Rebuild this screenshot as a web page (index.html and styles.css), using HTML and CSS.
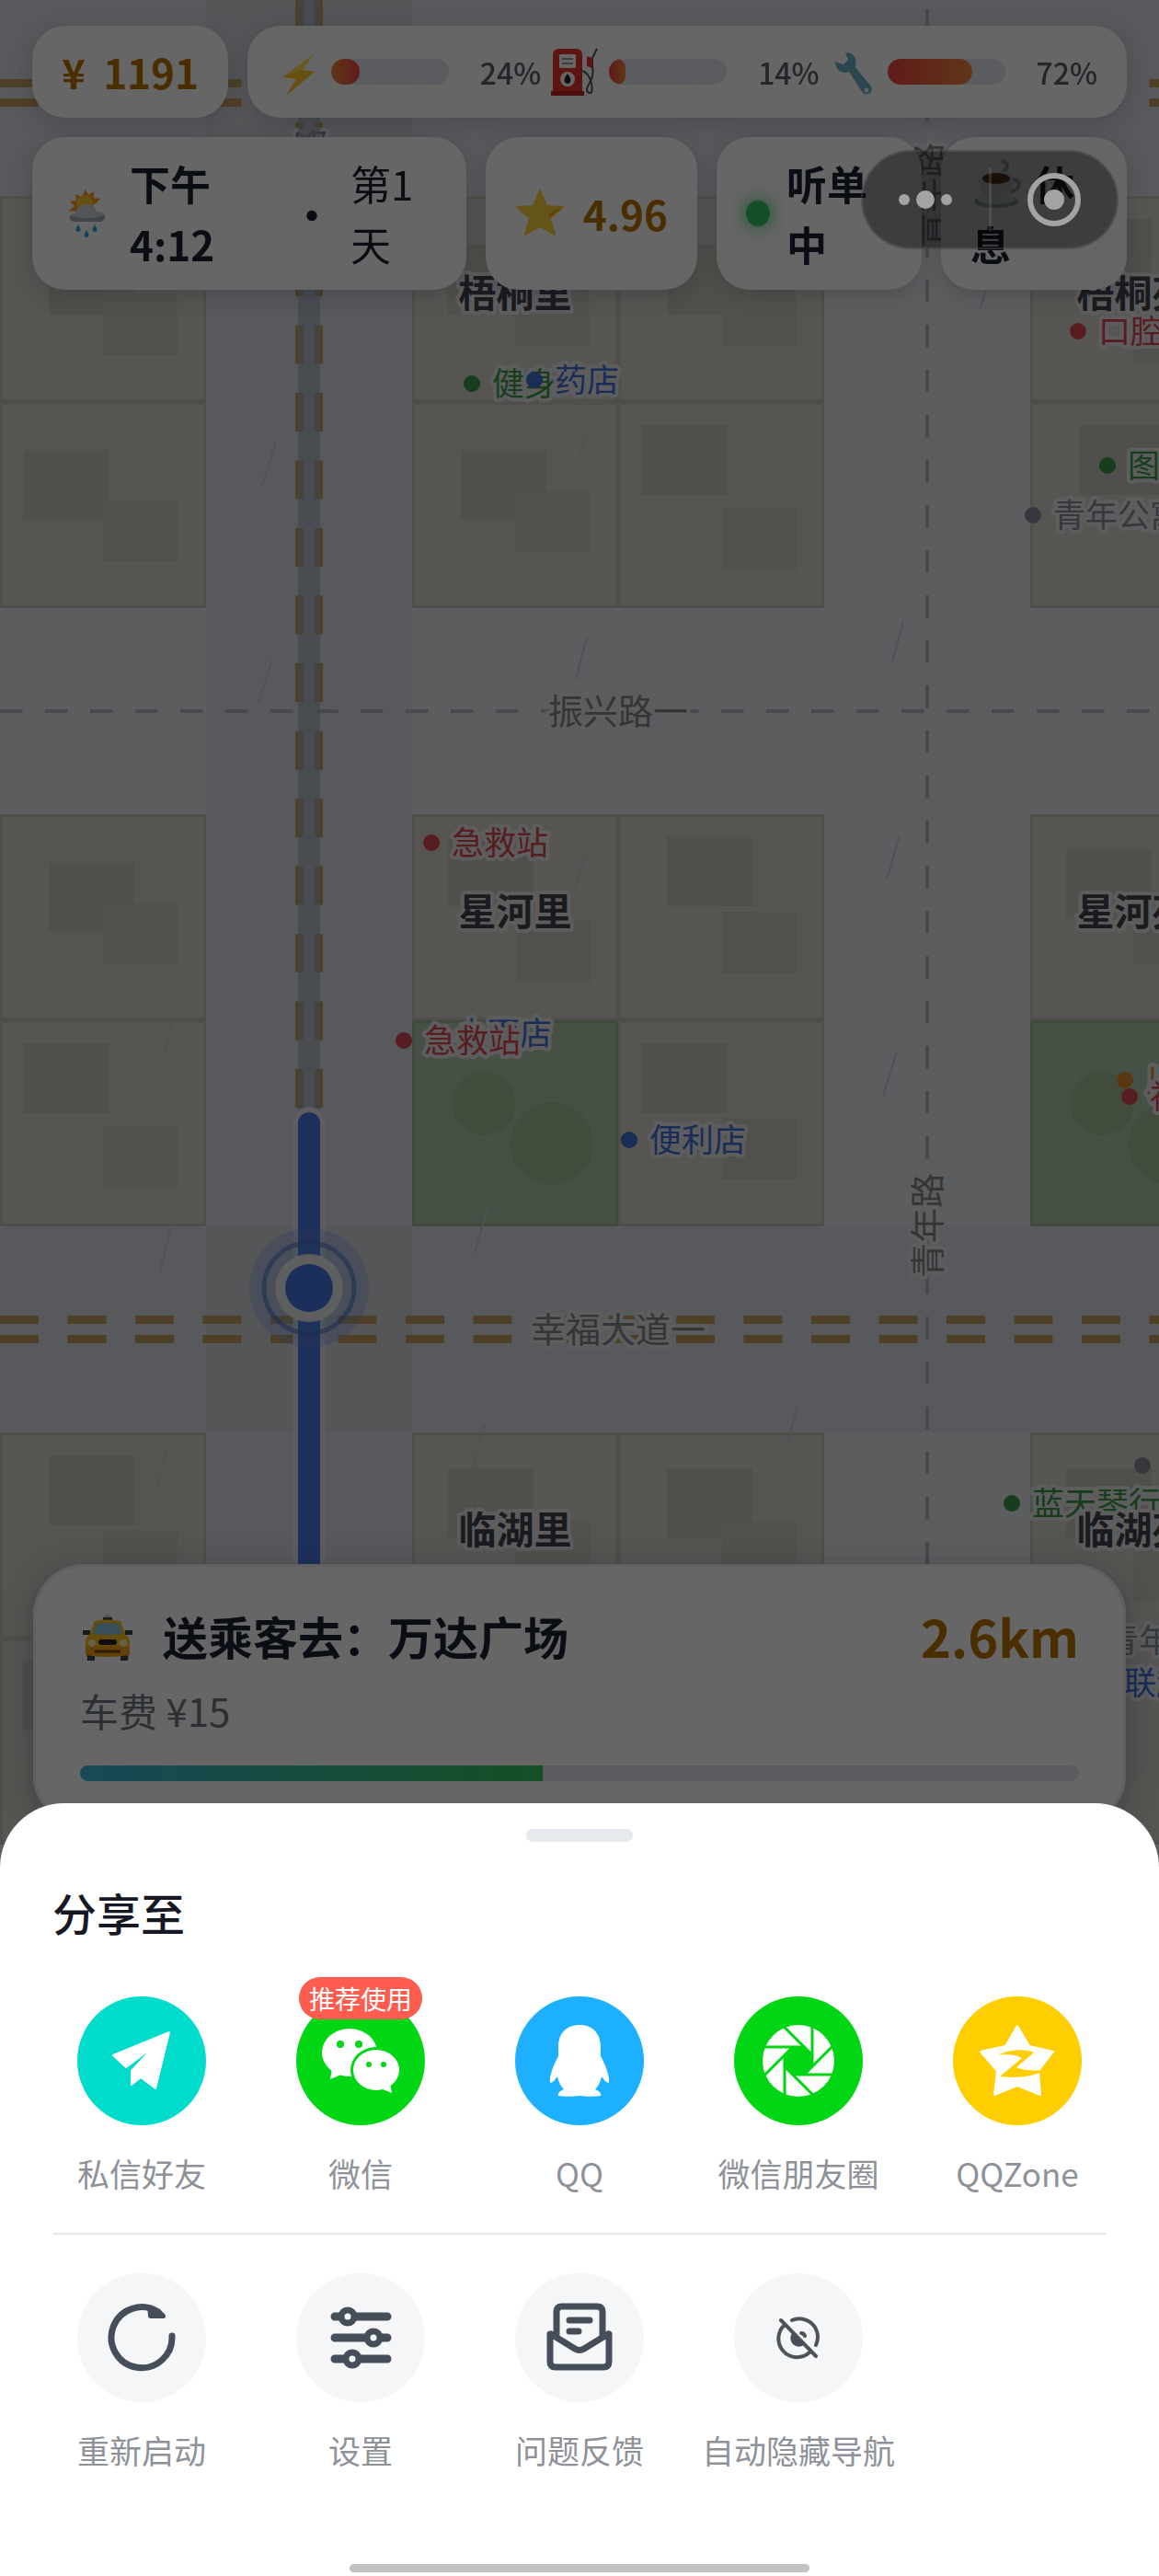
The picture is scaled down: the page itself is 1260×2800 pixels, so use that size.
FILE: index.html
```html
<!DOCTYPE html>
<html lang="zh-CN">
<head>
  <meta charset="UTF-8" />
  <meta name="viewport" content="width=device-width, initial-scale=1.0"/>
  <title>分享至</title>

  <link rel="stylesheet" href="styles.css">
</head>

<body>
  <div class="screen">
    <!-- city map -->
    <svg class="map" viewBox="0 0 1260 2800" preserveAspectRatio="xMidYMin slice" aria-hidden="true">
      <defs>
        <g id="block">
          <rect width="224" height="224" fill="#c6c4bb"/>
          <rect x="3" y="3" width="218" height="218" fill="#d6d4cd"/>
        </g>
        <g id="park">
          <rect width="224" height="224" fill="#a2b798"/>
          <rect x="3" y="3" width="218" height="218" fill="#b2c9ab"/>
          <circle cx="78" cy="90" r="35" fill="#a6bf9a"/>
          <circle cx="152" cy="134" r="45" fill="#a6bf9a"/>
        </g>
        <rect id="b1" width="93" height="76" fill="#c9c5bc"/>
        <rect id="b2" width="81" height="67" fill="#cdc9c0"/>
      </defs>

      <rect width="1260" height="2800" fill="#e6e8ec"/>
      <!-- main roads -->
      <rect x="224" width="224" height="2800" fill="#dcdee5"/>
      <rect y="0" width="1260" height="213" fill="#dcdee5"/>
      <rect y="1333" width="1260" height="224" fill="#dcdee5"/>
      <rect x="224" y="0" width="224" height="213" fill="#d4d6dc"/>
      <rect x="224" y="1333" width="224" height="224" fill="#d4d6dc"/>

      <use href="#block" x="0" y="213"/><use href="#block" x="448" y="213"/><use href="#block" x="672" y="213"/><use href="#block" x="1120" y="213"/>
      <use href="#block" x="0" y="437"/><use href="#block" x="448" y="437"/><use href="#block" x="672" y="437"/><use href="#block" x="1120" y="437"/>
      <use href="#block" x="0" y="885"/><use href="#block" x="448" y="885"/><use href="#block" x="672" y="885"/><use href="#block" x="1120" y="885"/>
      <use href="#block" x="0" y="1109"/><use href="#park" x="448" y="1109"/><use href="#block" x="672" y="1109"/><use href="#park" x="1120" y="1109"/>
      <use href="#block" x="0" y="1557"/><use href="#block" x="448" y="1557"/><use href="#block" x="672" y="1557"/><use href="#block" x="1120" y="1557"/>
      <use href="#block" x="0" y="1781"/><use href="#block" x="448" y="1781"/><use href="#block" x="672" y="1781"/><use href="#block" x="1120" y="1781"/>

      <!-- buildings -->
      <use href="#b1" x="53" y="266"/><use href="#b2" x="112" y="319"/>
      <use href="#b1" x="487" y="266"/><use href="#b2" x="560" y="308"/>
      <use href="#b1" x="725" y="266"/><use href="#b2" x="785" y="308"/>
      <use href="#b1" x="1159" y="238"/><use href="#b2" x="1232" y="329"/>
      <use href="#b1" x="25" y="489"/><use href="#b2" x="112" y="543"/>
      <use href="#b1" x="501" y="489"/><use href="#b2" x="560" y="533"/>
      <use href="#b1" x="697" y="462"/><use href="#b2" x="785" y="553"/>
      <use href="#b1" x="1173" y="462"/>
      <use href="#b1" x="53" y="937"/><use href="#b2" x="112" y="981"/>
      <use href="#b1" x="487" y="909"/><use href="#b2" x="561" y="1001"/>
      <use href="#b1" x="725" y="909"/><use href="#b2" x="785" y="991"/>
      <use href="#b1" x="1159" y="923"/><use href="#b2" x="1232" y="980"/>
      <use href="#b1" x="25" y="1134"/><use href="#b2" x="112" y="1225"/>
      <use href="#b1" x="697" y="1134"/><use href="#b2" x="785" y="1215"/>
      <use href="#b1" x="53" y="1582"/><use href="#b2" x="112" y="1663"/>
      <use href="#b1" x="487" y="1596"/><use href="#b2" x="561" y="1653"/>
      <use href="#b1" x="725" y="1596"/><use href="#b2" x="785" y="1653"/>
      <use href="#b1" x="1159" y="1596"/><use href="#b2" x="1232" y="1673"/>
      <use href="#b1" x="25" y="1805"/>

      <!-- lane marks -->
      <g stroke="#b4b6be" stroke-width="4" stroke-dasharray="24.5 24.5">
        <path d="M0 773H1260"/>
        <path d="M1008 10V2000"/>
      </g>
      <g stroke="#c4a062" stroke-width="9" stroke-dasharray="42 31.5">
        <path d="M0 90.500H1260M0 111.500H1260M0 1434.500H1260M0 1455.500H1260"/>
        <path d="M325.500 -14V1205M346.500 -14V1205"/>
      </g>

      <!-- rain -->
      <path d="M300 481l-15 47M296 717l-15 47M191 1100l-14 48M636 929l-15 46M978 908l-14 48M975 1143l-15 48M530 1314l-14 48M527 1548l-14 47M867 1528l-12 47M183 1570l-13 47M1079 290l-14 47M642 462l-14 40M638 693l-12 45M982 675l-12 45M186 1334l-12 48" stroke="#c4cedd" stroke-width="2" fill="none"/>

      <g class="road-name">
        <text x="672" y="787">振兴路一</text>
        <text x="672" y="1459">幸福大道一</text>
        <text transform="translate(1022 212) rotate(-90)">青年路</text>
        <text transform="translate(1022 1332) rotate(-90)">青年路</text>
        <text transform="translate(350 196) rotate(-90)">青年路</text>
      </g>

      <!-- route -->
      <path d="M336 0V1209" stroke="#a2abba" stroke-opacity=".65" stroke-width="24"/>
      <path d="M336 1221V2800" stroke="#e8e9ea" stroke-width="35" stroke-linecap="round"/>
      <path d="M336 1221V2800" stroke="#4a78e4" stroke-width="24" stroke-linecap="round"/>

      <!-- shops -->
      <g class="poi green">
        <circle cx="513" cy="417" r="9"/><text x="535" y="430">健身</text>
        <circle cx="1204" cy="506" r="9"/><text x="1226" y="519">图书馆</text>
        <circle cx="1100" cy="1634" r="9"/><text x="1122" y="1647">蓝天琴行</text>
      </g>
      <g class="poi blue">
        <text x="495" y="1136">小面店</text>
        <circle cx="581" cy="413" r="9"/><text x="603" y="426">药店</text>
        <circle cx="684" cy="1239" r="9"/><text x="706" y="1252">便利店</text>
        <circle cx="1165" cy="1829" r="9"/><text x="1187" y="1842">华联超市</text>
      </g>
      <g class="poi orange">
        <text x="1246" y="1187">川菜馆</text>
        <circle cx="1223" cy="1174" r="9"/>
      </g>
      <g class="poi gray">
        <circle cx="1123" cy="560" r="9"/><text x="1145" y="573">青年公寓</text>
        <circle cx="1242" cy="1593" r="9"/>
        <circle cx="1181" cy="1783" r="9"/><text x="1203" y="1796">青年公寓</text>
        <circle cx="560" cy="1877" r="9"/><text x="582" y="1890">青年公寓</text>
      </g>
      <g class="poi red">
        <circle cx="1172" cy="360" r="9"/><text x="1194" y="373">口腔诊所</text>
        <circle cx="469" cy="916" r="9"/><text x="491" y="929">急救站</text>
        <circle cx="439" cy="1131" r="9"/><text x="461" y="1144">急救站</text>
        <circle cx="1228" cy="1192" r="9"/><text x="1250" y="1205">社区医院</text>
        <circle cx="646" cy="1735" r="9"/><text x="668" y="1748">同仁药店</text>
      </g>
      <g class="area-name">
        <text x="560" y="334">梧桐里</text>
        <text x="1232" y="334">梧桐苑</text>
        <text x="560" y="1006">星河里</text>
        <text x="1232" y="1006">星河苑</text>
        <text x="560" y="1678">临湖里</text>
        <text x="1232" y="1678">临湖苑</text>
      </g>

      <!-- driver -->
      <circle cx="336" cy="1400" r="65" fill="#5b8def" fill-opacity=".25"/>
      <circle cx="336" cy="1400" r="49" fill="none" stroke="#4a78c4" stroke-opacity=".6" stroke-width="5"/>
      <circle cx="336" cy="1400" r="37" fill="#e9eaea"/>
      <circle cx="336" cy="1400" r="26" fill="#4378e0"/>
    </svg>

    <header class="hud">
      <div class="hudRow">
        <div class="card money"><span>¥</span><span>1191</span></div>
        <div class="card stats">
          <div class="stat">
            <svg class="emoji" viewBox="0 0 44 54" aria-hidden="true"><path d="M40 8L6 33 21 35 10 53 41 27 28 25Z" fill="#ffc928"/><path d="M40 8L8 32 28 25z" fill="#ffe052"/></svg>
            <div class="bar"><div class="barFill low" style="width: 24%"></div></div>
            <span class="percent">24%</span>
          </div>
          <div class="stat">
            <svg class="emoji" viewBox="0 0 44 54" aria-hidden="true">
              <path d="M-2 50V9q0-7 7-7h18q7 0 7 7v41z" fill="#e8352e"/><path d="M-4 48h36v5H-4z" fill="#b8251f"/>
              <path d="M5 9q0-1 1-1h16q1 0 1 1v13q0 1-1 1H6q-1 0-1-1z" fill="#fff"/><path d="M8 13h12M8 18h12" stroke="#9aa0a6" stroke-width="2"/>
              <circle cx="14" cy="35" r="8" fill="#fff"/><path d="M14 29q7 9 0 11-7-2 0-11z" fill="#222"/>
              <path d="M30 26q8 3 10 14t-2 10q-6-1 0-11 5-8 3-18V12l5-10" fill="none" stroke="#555" stroke-width="2"/><path d="M35 10l6 2v11l-6-2z" fill="#e8352e"/>
            </svg>
            <div class="bar"><div class="barFill fuel" style="width: 14%"></div></div>
            <span class="percent">14%</span>
          </div>
          <div class="stat">
            <svg class="emoji" viewBox="0 0 44 54" aria-hidden="true"><path d="M13 6l3 8-5 5-9-3c0 10 9 14 15 11l15 23c5 4 12-1 9-7L24 22C26 12 22 6 13 6z" fill="#6fb0c8"/><circle cx="36" cy="47" r="2.500" fill="#e8f2f5"/></svg>
            <div class="bar"><div class="barFill fuel" style="width: 72%"></div></div>
            <span class="percent">72%</span>
          </div>
        </div>
      </div>

      <div class="hudRow info">
        <div class="card clock">
          <svg class="emoji" viewBox="0 0 44 54" aria-hidden="true">
            <path d="M20 1l3 6 6-4v7l7 1-5 5-23 16 2-7-8-1 6-5-5-5 7-1-1-7 7 3z" fill="#f79a1f"/><circle cx="19" cy="16" r="9" fill="#ffc62e"/>
            <path d="M9 36c-9 0-8-9 0-9 2-12 20-14 23-2 12 0 12 11 3 11z" fill="#cfd8dc"/><path d="M9 36c-6 0-7-5-5-7 10 5 28 4 37-1 0 5-2 8-6 8z" fill="#9fb0b8"/>
            <path d="M12 39q5 8 0 8t0-8zM30 39q5 8 0 8t0-8zM21 45q5 8 0 8t0-8z" fill="#29a8e0"/>
          </svg>
          <strong class="time">下午<br>4:12</strong>
          <strong>·</strong>
          <span class="day">第1<br>天</span>
        </div>
        <div class="card rating">
          <svg class="emoji" viewBox="0 0 54 54" aria-hidden="true"><path d="M27 2l7 17 18 1-14 12 5 18-16-9-16 9 5-18L2 20l18-1z" fill="#fdd33c" stroke="#fdd33c" stroke-width="2" stroke-linejoin="round"/><path d="M38 32l13-12-15 8z" fill="#f0a81c"/></svg>
          <strong>4.96</strong>
        </div>
        <div class="card status"><span class="statusDot"></span><strong>听单<br>中</strong></div>
        <button type="button" class="card rest">
          <svg class="emoji" viewBox="0 0 54 54" aria-hidden="true">
            <path d="M32 1c8 2 8 8 1 12" fill="none" stroke="#b9bec4" stroke-width="4"/>
            <ellipse cx="26" cy="45" rx="24" ry="7" fill="#a9bfc0"/><ellipse cx="26" cy="43" rx="20" ry="5" fill="#e8eeee"/>
            <path d="M42 22c12-4 12 13-3 13" fill="none" stroke="#a9bfc0" stroke-width="4"/>
            <path d="M8 19h36c1 14-5 26-18 26S7 33 8 19z" fill="#dfe5e6"/><ellipse cx="26" cy="19" rx="18" ry="7" fill="#f5f5f5"/><ellipse cx="26" cy="20" rx="15" ry="6" fill="#6b3a22"/>
          </svg>
          休<br>息
        </button>
      </div>
    </header>

    <article class="card order">
      <div class="orderHead">
        <svg class="taxi" viewBox="0 0 56 56" aria-hidden="true">
          <path d="M23 9q5-10 10 0v4H23z" fill="#d5d8da"/><path d="M23 8h10v4H23z" fill="#444"/>
          <path d="M5 43h9v12H6zM42 43h9l-1 12h-8z" fill="#3a4448"/>
          <path d="M14 12q14-3 28 0l6 15q5 4 4 12v8H4v-8q-1-8 4-12z" fill="#f9c21b"/><path d="M4 39h48v10q-24 4-48 0z" fill="#f3a01b"/>
          <path d="M16 15q12-2 24 0l4 11q-16 2-32 0z" fill="#8cc4dc"/><path d="M1 22h8v5H1zM47 22h8v5h-8z" fill="#3a4448"/>
          <circle cx="11" cy="36" r="4" fill="#fff1b0"/><circle cx="45" cy="36" r="4" fill="#fff1b0"/><rect x="18" y="32" width="20" height="6" rx="3" fill="#222"/><path d="M14 45h28" stroke="#6b4a12" stroke-width="3"/>
        </svg>
        <h2>送乘客去：万达广场</h2>
        <strong class="distance">2.6km</strong>
      </div>
      <p class="fare">车费 ¥15</p>
      <div class="trip"><div class="tripFill" style="width: 46.3%"></div></div>
    </article>

    <div class="mask"></div>

    <div class="capsule">
      <button type="button" aria-label="更多">
        <svg width="60" height="60" viewBox="0 0 60 60"><circle cx="7" cy="30" r="6"/><circle cx="30" cy="30" r="10"/><circle cx="53" cy="30" r="6"/></svg>
      </button>
      <button type="button" aria-label="关闭">
        <svg width="60" height="60" viewBox="0 0 60 60"><circle cx="30" cy="30" r="26" fill="none" stroke="#a3a3a3" stroke-width="6"/><circle cx="30" cy="30" r="11"/></svg>
      </button>
    </div>

    <section class="sheet">
      <div class="handle"></div>
      <h1>分享至</h1>

      <div class="actions">
        <button type="button" class="action">
          <svg class="icon teal" viewBox="0 0 140 140"><path d="M100 39L39 64 53 77 84 54 59 81V96L69 88 85 100Z" stroke="#fff" stroke-width="2" stroke-linejoin="round"/></svg>
          <span>私信好友</span>
        </button>
        <button type="button" class="action">
          <span class="badge">推荐使用</span>
          <svg class="icon wechat" viewBox="0 0 140 140">
            <ellipse cx="58" cy="61" rx="30" ry="26"/><path d="M39 78l-2 12 12-5z"/>
            <circle class="hole" cx="48" cy="52" r="4"/><circle class="hole" cx="68" cy="52" r="4"/>
            <ellipse class="hole" cx="87" cy="80" rx="28" ry="25"/>
            <ellipse cx="87" cy="80" rx="25" ry="22"/><path d="M94 101l10 4-2-11z"/>
            <circle class="hole" cx="79" cy="74" r="3"/><circle class="hole" cx="95" cy="74" r="3"/>
          </svg>
          <span>微信</span>
        </button>
        <button type="button" class="action">
          <svg class="icon qq" viewBox="0 0 140 140"><path d="M70 31C55 31 47 41 47 55V65C42 74 37 86 38 94 41 94 44 90 46 87 47 93 50 98 53 101 48 103 46 106 47 108 52 109 64 109 70 108 76 109 88 109 93 108 94 106 92 103 87 101 90 98 93 93 94 87 96 90 99 94 102 94 103 86 98 74 93 65V55C93 41 85 31 70 31Z"/></svg>
          <span>QQ</span>
        </button>
        <button type="button" class="action">
          <svg class="icon wechat" viewBox="0 0 140 140">
            <defs><path id="blade" d="M85 76V26"/></defs>
            <circle cx="70" cy="70" r="39"/>
            <path class="hole" d="M64 55h12l9 9v12l-9 9H64l-9-9V64z"/>
            <g stroke="#00d614" stroke-width="3">
              <use href="#blade"/><use href="#blade" transform="rotate(45 70 70)"/><use href="#blade" transform="rotate(90 70 70)"/><use href="#blade" transform="rotate(135 70 70)"/>
              <use href="#blade" transform="rotate(180 70 70)"/><use href="#blade" transform="rotate(225 70 70)"/><use href="#blade" transform="rotate(270 70 70)"/><use href="#blade" transform="rotate(315 70 70)"/>
            </g>
          </svg>
          <span>微信朋友圈</span>
        </button>
        <button type="button" class="action">
          <svg class="icon qzone" viewBox="0 0 140 140">
            <path d="M70 32L83 54 109 60 93 81 95 107 70 97 45 107 48 81 30 60 57 54Z" stroke="#fff" stroke-width="2" stroke-linejoin="round"/>
            <path class="hole" d="M49 64C58 58 78 56 88 61L69 77C77 81 90 81 99 80 88 88 66 89 51 87L75 67C68 63 57 62 49 64Z"/>
          </svg>
          <span>QQZone</span>
        </button>
      </div>

      <hr>

      <div class="actions">
        <button type="button" class="action">
          <svg class="icon tool" viewBox="0 0 140 140"><path d="M103 68A33 33 0 1 1 88 42" fill="none"/><path class="solid" d="M76 36Q88 37 95 44q3 5-2 5H80q-3 0-3-3z"/></svg>
          <span>重新启动</span>
        </button>
        <button type="button" class="action">
          <svg class="icon tool" viewBox="0 0 140 140">
            <path d="M42 47H99M42 70H99M42 93H99" stroke-width="9"/>
            <g fill="#f4f6f8"><circle cx="56" cy="47" r="7"/><circle cx="84" cy="70" r="7"/><circle cx="61" cy="93" r="7"/></g>
          </svg>
          <span>设置</span>
        </button>
        <button type="button" class="action">
          <svg class="icon tool" viewBox="0 0 140 140"><path d="M45 68V42q0-6 6-6h38q6 0 6 6V68M39 66L65 82q5 3 10 0L101 66M38 66V96q0 6 6 6H96q6 0 6-6V66M59 51H81M59 63H69" fill="none"/></svg>
          <span>问题反馈</span>
        </button>
        <button type="button" class="action">
          <svg class="icon tool nav" viewBox="0 0 140 140"><path d="M63 51A20 20 0 0 1 89 78M82 86A20 20 0 0 1 55 56M51 51L89 90M73 65q3 0 4 3" fill="none"/><path class="solid" d="M64 64L77 77A8 8 0 1 1 64 64z"/></svg>
          <span>自动隐藏导航</span>
        </button>
      </div>

      <div class="homeBar"></div>
    </section>
  </div>
</body>
</html>
```
FILE: styles.css
```css
* {
  box-sizing: border-box;
  margin: 0;
  padding: 0;
}

body {
  font-family: "Noto Sans CJK SC", "Noto Sans", sans-serif;
  color: #161823;
  background: #5c5d60;
}

button {
  font: inherit;
  color: inherit;
  background: none;
  border: none;
  cursor: pointer;
}

.screen {
  position: relative;
  min-height: 100vh;
  display: flex;
  flex-direction: column;
  overflow: hidden;
}

/* map */
.map {
  position: absolute;
  top: 0;
  left: 0;
  width: 100%;
  height: 100%;
}

.map text {
  paint-order: stroke;
  stroke: #e8e9ec;
  stroke-width: 8px;
  stroke-linejoin: round;
}

.road-name text {
  font-size: 38px;
  fill: #84868c;
  text-anchor: middle;
}

.area-name text {
  font-size: 41px;
  font-weight: bold;
  fill: #3f444e;
  text-anchor: middle;
}

.poi text {
  font-size: 35px;
}

.red { fill: #d94a50; }
.green { fill: #3a9a48; }
.blue { fill: #3f70d8; }
.orange { fill: #e08a2c; }
.gray { fill: #8a8d98; }

/* hud */
.hud {
  position: relative;
  padding: 28px 35px;
  display: flex;
  flex-direction: column;
  gap: 21px;
}

.hudRow {
  display: flex;
  gap: 21px;
}

.info {
  display: grid;
  grid-template-columns: 472fr 230fr 223fr 202fr;
}

.card {
  background: rgba(255, 255, 255, 0.97);
  border-radius: 36px;
  box-shadow: 0 6px 24px rgba(30, 41, 59, 0.2);
}

.hud .card {
  padding: 17px 32px;
  display: flex;
  align-items: center;
  font-size: 44px;
  line-height: 66px;
  color: #1c2232;
  white-space: nowrap;
  backdrop-filter: blur(12px);
}

.hud .money {
  justify-content: space-between;
  flex: 0 0 213px;
  font-weight: bold;
  color: #b87400;
}

.hud .stats {
  flex: 1;
  gap: 15px;
}

.stat {
  flex: 1;
  display: flex;
  align-items: center;
  gap: 15px;
}

.emoji {
  flex: none;
  height: 54px;
  overflow: visible;
}

.bar {
  flex: 0 0 128px;
  height: 28px;
  border-radius: 14px;
  background: #e2e5ee;
  overflow: hidden;
}

.barFill {
  height: 100%;
  border-radius: 14px;
}

.low {
  background: linear-gradient(90deg, #f0883e, #ef4444);
}

.fuel {
  background: linear-gradient(90deg, #ef4444, #f0883e);
}

.percent {
  flex: 1;
  text-align: right;
  font-size: 32px;
  font-weight: 500;
  color: #5a5f6c;
}

.clock .emoji {
  margin: 0 24px 0 6px;
}

.time {
  width: 176px;
}

.day {
  margin-left: 20px;
}

.rating {
  justify-content: space-between;
}

.rating strong {
  color: #b87400;
}

.status {
  gap: 18px;
}

.statusDot {
  flex: none;
  width: 26px;
  height: 28px;
  border-radius: 50%;
  background: #2fc45f;
  box-shadow: 0 0 20px #2fc45f;
}

.hud .rest {
  display: block;
  text-align: left;
  font-weight: bold;
}

.rest .emoji {
  margin: 0 3px 0 2px;
  vertical-align: -10px;
}

/* order */
.order {
  position: relative;
  margin: auto 36px -25px;
  padding: 42px 51px 49px;
  border-radius: 56px;
  background: rgba(255, 255, 255, 0.98);
  box-shadow: inset 0 0 0 3px #f1f1f2, 0 6px 36px rgba(30, 41, 59, 0.3);
}

.orderHead {
  display: flex;
  align-items: center;
}

.taxi {
  width: 56px;
  height: 56px;
  margin: 0 32px 0 2px;
}

.order h2 {
  flex: 1;
  font-size: 49px;
  line-height: 72px;
  color: #1c2232;
}

.distance {
  font-size: 56px;
  line-height: 72px;
  color: #b87400;
}

.fare {
  margin: 15px 0 30px;
  font-size: 42px;
  line-height: 60px;
  color: #6f7680;
}

.trip {
  height: 17px;
  border-radius: 9px;
  background: #e2e4ea;
  overflow: hidden;
}

.tripFill {
  height: 100%;
  background: linear-gradient(90deg, #3fb4dc, #35c75c);
}

.mask {
  position: absolute;
  inset: 0;
  background: rgba(0, 0, 0, 0.6);
}

.capsule {
  position: absolute;
  top: 163px;
  right: 44px;
  width: 280px;
  height: 108px;
  display: flex;
  align-items: center;
  border: 2px solid rgba(120, 120, 120, 0.3);
  border-radius: 54px;
  background: rgba(0, 0, 0, 0.4);
}

.capsule button {
  flex: 1;
  height: 68px;
  display: flex;
  align-items: center;
  justify-content: center;
  fill: #a3a3a3;
}

.capsule button + button {
  border-left: 3px solid rgba(120, 120, 120, 0.3);
}

/* share sheet */
.sheet {
  position: relative;
  padding: 28px 35px 4px;
  border-radius: 70px 70px 0 0;
  background: #fff;
}

.handle {
  width: 116px;
  height: 14px;
  margin: 0 auto;
  border-radius: 7px;
  background: #e6eaee;
}

.sheet h1 {
  margin: 46px 22px 62px;
  font-size: 48px;
  line-height: 60px;
  font-weight: 500;
}

.actions {
  display: grid;
  grid-template-columns: repeat(5, 1fr);
}

.action {
  position: relative;
  display: flex;
  flex-direction: column;
  align-items: center;
  gap: 28px;
  font-size: 35px;
  line-height: 48px;
  color: #8e9298;
}

.icon {
  width: 140px;
  height: 140px;
  border-radius: 50%;
  fill: #fff;
}

.teal { background: #00dccb; }
.wechat { background: #00d614; }
.qq { background: #1cb0ff; }
.qzone { background: #ffce00; }

.wechat .hole { fill: #00d614; }
.qzone .hole { fill: #ffce00; }

.tool {
  background: #f4f6f8;
  stroke: #464e5a;
  stroke-width: 7;
  stroke-linecap: round;
  stroke-linejoin: round;
}

.tool.nav {
  stroke: #4f5258;
  stroke-width: 4;
}

.tool .solid {
  fill: #464e5a;
  stroke: none;
}

.badge {
  position: absolute;
  top: -21px;
  padding: 0 11px;
  border-radius: 23px;
  background: #ff5c50;
  color: #fff;
  font-size: 28px;
  line-height: 46px;
}

.sheet hr {
  height: 2px;
  margin: 41px 22px 42px;
  border: none;
  background: #e8eaea;
}

.homeBar {
  width: 42%;
  height: 9px;
  margin: 100px auto 0;
  border-radius: 5px;
  background: #c2c2c2;
}
```
